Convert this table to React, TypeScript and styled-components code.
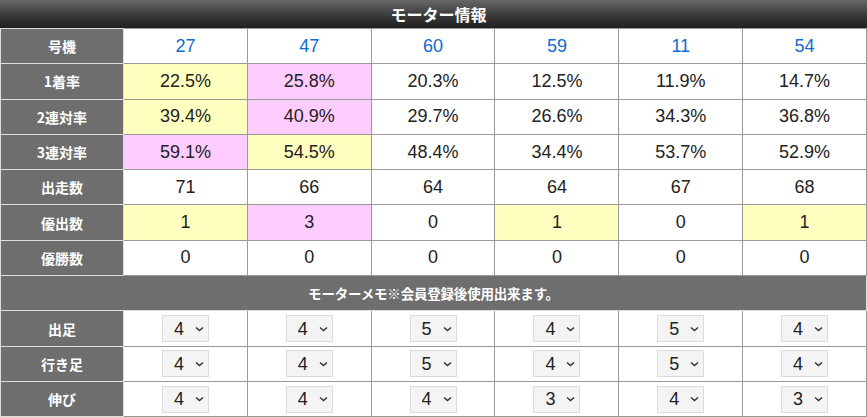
import React, { FC } from "react";
import styled, { createGlobalStyle } from "styled-components";

const GlobalStyle = createGlobalStyle`
  html, body {
    margin: 0;
    padding: 0;
    background: #ffffff;
  }
  body {
    font-family: "Liberation Sans", "Noto Sans CJK JP", sans-serif;
  }
`;

const Wrapper = styled.div`
  width: 867px;
  display: flex;
  flex-direction: column;
`;

const TitleBar = styled.div`
  height: 28px;
  display: flex;
  align-items: center;
  justify-content: center;
  background: linear-gradient(to bottom, #676767 0%, #3a3a3a 55%, #1f1f1f 100%);
  color: #ffffff;
  font-family: "Noto Sans CJK JP", sans-serif;
  font-weight: 700;
  font-size: 16px;
  padding-left: 10px;
`;

const Table = styled.table`
  width: 867px;
  height: 389px;
  border-collapse: collapse;
  table-layout: fixed;
`;

const Row = styled.tr`
  height: 35.3px;
`;

const HeadCell = styled.th`
  background: #6e6e6e;
  color: #ffffff;
  border: 1px solid #dddddd;
  font-family: "Noto Sans CJK JP", sans-serif;
  font-weight: 700;
  font-size: 14px;
  text-align: center;
  padding: 0;
  width: 122px;
`;

const MemoHead = styled(HeadCell)`
  font-size: 13.5px;
  letter-spacing: -0.2px;
`;

const Cell = styled.td<{ $bg?: string; $blue?: boolean }>`
  background: ${(p) => p.$bg || "#ffffff"};
  color: ${(p) => (p.$blue ? "#0f6bcf" : "#222222")};
  border: 1px solid #999999;
  font-size: 18px;
  text-align: center;
  padding: 0;
`;

const SelectBox = styled.div`
  position: relative;
  display: inline-flex;
  vertical-align: middle;
`;

const Select = styled.select`
  appearance: none;
  -webkit-appearance: none;
  width: 47px;
  height: 27px;
  padding: 0 0 0 11px;
  margin: 0;
  background: #f4f4f4;
  border: 1px solid #dcdcdc;
  border-radius: 0;
  font-family: "Liberation Sans", sans-serif;
  font-size: 18px;
  color: #222222;
  text-align: left;
  outline: none;
`;

const Chevron = styled.svg`
  position: absolute;
  right: 5px;
  top: 10.5px;
  pointer-events: none;
`;

const YELLOW = "#ffffbf";
const PINK = "#ffccff";

type Stat = { label: string; values: string[]; bgs?: (string | undefined)[] };

const ids = ["27", "47", "60", "59", "11", "54"];

const stats: Stat[] = [
  {
    label: "1着率",
    values: ["22.5%", "25.8%", "20.3%", "12.5%", "11.9%", "14.7%"],
    bgs: [YELLOW, PINK],
  },
  {
    label: "2連対率",
    values: ["39.4%", "40.9%", "29.7%", "26.6%", "34.3%", "36.8%"],
    bgs: [YELLOW, PINK],
  },
  {
    label: "3連対率",
    values: ["59.1%", "54.5%", "48.4%", "34.4%", "53.7%", "52.9%"],
    bgs: [PINK, YELLOW],
  },
  { label: "出走数", values: ["71", "66", "64", "64", "67", "68"] },
  {
    label: "優出数",
    values: ["1", "3", "0", "1", "0", "1"],
    bgs: [YELLOW, PINK, undefined, YELLOW, undefined, YELLOW],
  },
  { label: "優勝数", values: ["0", "0", "0", "0", "0", "0"] },
];

const memos: { label: string; values: string[] }[] = [
  { label: "出足", values: ["4", "4", "5", "4", "5", "4"] },
  { label: "行き足", values: ["4", "4", "5", "4", "5", "4"] },
  { label: "伸び", values: ["4", "4", "4", "3", "4", "3"] },
];

const Grade: FC<{ value: string }> = ({ value }) => (
  <SelectBox>
    <Select defaultValue={value}>
      {["1", "2", "3", "4", "5"].map((v) => (
        <option key={v} value={v}>
          {v}
        </option>
      ))}
    </Select>
    <Chevron width="9" height="6" viewBox="0 0 9 6">
      <path d="M1 1.5 L4.5 4.5 L8 1.5" fill="none" stroke="#333" strokeWidth="1.5" />
    </Chevron>
  </SelectBox>
);

const App: FC = () => (
  <Wrapper>
    <GlobalStyle />
    <TitleBar>モーター情報</TitleBar>
    <Table>
      <tbody>
        <Row>
          <HeadCell>号機</HeadCell>
          {ids.map((id) => (
            <Cell key={id} $blue>
              {id}
            </Cell>
          ))}
        </Row>
        {stats.map((s) => (
          <Row key={s.label}>
            <HeadCell>{s.label}</HeadCell>
            {s.values.map((v, i) => (
              <Cell key={i} $bg={s.bgs?.[i]}>
                {v}
              </Cell>
            ))}
          </Row>
        ))}
        <Row>
          <MemoHead colSpan={7}>モーターメモ※会員登録後使用出来ます。</MemoHead>
        </Row>
        {memos.map((m) => (
          <Row key={m.label}>
            <HeadCell>{m.label}</HeadCell>
            {m.values.map((v, i) => (
              <Cell key={i}>
                <Grade value={v} />
              </Cell>
            ))}
          </Row>
        ))}
      </tbody>
    </Table>
  </Wrapper>
);

export default App;
